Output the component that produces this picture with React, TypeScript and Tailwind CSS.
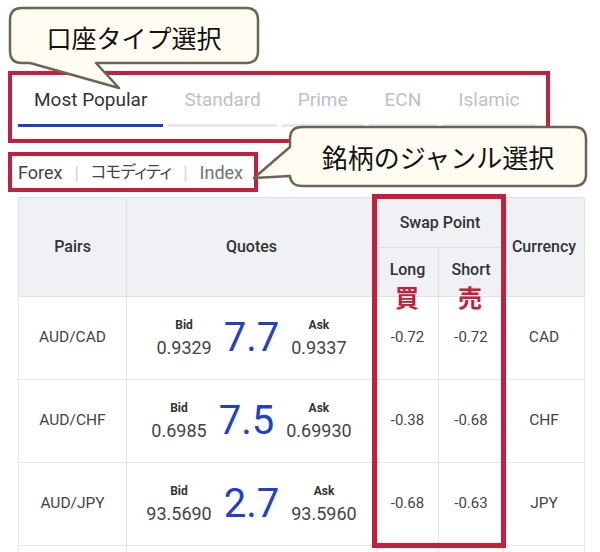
import React from 'react';

const RED = 'border-[#c2203d]';

const tabs = [
  { label: 'Most Popular', active: true },
  { label: 'Standard', active: false },
  { label: 'Prime', active: false },
  { label: 'ECN', active: false },
  { label: 'Islamic', active: false },
];

const rows = [
  { pair: 'AUD/CAD', bid: '0.9329', spread: '7.7', ask: '0.9337', long: '-0.72', short: '-0.72', ccy: 'CAD' },
  { pair: 'AUD/CHF', bid: '0.6985', spread: '7.5', ask: '0.69930', long: '-0.38', short: '-0.68', ccy: 'CHF' },
  { pair: 'AUD/JPY', bid: '93.5690', spread: '2.7', ask: '93.5960', long: '-0.68', short: '-0.63', ccy: 'JPY' },
];

const Price: React.FC<{ label: string; value: string }> = ({ label, value }) => (
  <div className="flex flex-col items-center">
    <span className="text-[12px] font-bold leading-none text-[#333]">{label}</span>
    <span className="mt-[8px] text-[18px] leading-none text-[#444]">{value}</span>
  </div>
);

export default function App() {
  return (
    <div className="relative h-[552px] w-[600px] overflow-hidden bg-white font-['Roboto','Noto_Sans_CJK_JP',sans-serif]">
      {/* account type tabs */}
      <div className="flex gap-[5px] pl-[18px] pt-[86px]">
        {tabs.map((t) => (
          <div key={t.label} className="flex flex-col">
            <span
              className={`px-4 text-[19px] leading-[28px] ${t.active ? 'text-[#333]' : 'text-[#bac1ce]'}`}
            >
              {t.label}
            </span>
            <div className={`mt-[10px] h-[3px] ${t.active ? 'bg-[#1c3fcc]' : 'bg-[#e6e8ec]'}`} />
          </div>
        ))}
      </div>

      {/* instrument categories */}
      <div className="mt-[34px] flex items-center gap-[12px] pl-[18px] text-[18px] leading-[24px]">
        <span className="text-[#444]">Forex</span>
        <span className="text-[#d4d4d4]">|</span>
        <span className="text-[16.5px] tracking-[-0.8px] text-[#444] [font-feature-settings:'palt']">コモディティ</span>
        <span className="text-[#d4d4d4]">|</span>
        <span className="text-[#6b7280]">Index</span>
      </div>

      {/* quotes table */}
      <table className="ml-[18px] mt-[12px] w-[566px] table-fixed border-collapse text-center text-[#444]">
        <colgroup>
          <col className="w-[108px]" />
          <col className="w-[250px]" />
          <col className="w-[62px]" />
          <col className="w-[65px]" />
          <col className="w-[81px]" />
        </colgroup>
        <thead className="bg-[#eff1f5] text-[16px] font-medium text-[#333]">
          <tr className="h-[50px]">
            <th rowSpan={2} className="border border-[#dfe1e6] font-medium">Pairs</th>
            <th rowSpan={2} className="border border-[#dfe1e6] font-medium">Quotes</th>
            <th colSpan={2} className="border border-[#dfe1e6] font-medium">Swap Point</th>
            <th rowSpan={2} className="border border-[#dfe1e6] font-medium">Currency</th>
          </tr>
          <tr className="h-[49px]">
            <th className="border border-[#dfe1e6] pb-[4px] font-medium">Long</th>
            <th className="border border-[#dfe1e6] pb-[4px] font-medium">Short</th>
          </tr>
        </thead>
        <tbody className="text-[15.5px]">
          {rows.map((r) => (
            <tr key={r.pair} className="h-[83px]">
              <td className="border border-[#e3e5e9]">{r.pair}</td>
              <td className="border border-[#e3e5e9]">
                <div className="flex items-center justify-center gap-3">
                  <Price label="Bid" value={r.bid} />
                  <span className="text-[40px] leading-none text-[#2340c8]">{r.spread}</span>
                  <Price label="Ask" value={r.ask} />
                </div>
              </td>
              <td className="border border-[#e3e5e9] pb-[2px] text-[15px]">{r.long}</td>
              <td className="border border-[#e3e5e9] pb-[2px] text-[15px]">{r.short}</td>
              <td className="border border-[#e3e5e9]">{r.ccy}</td>
            </tr>
          ))}
          <tr className="h-[83px]">
            <td className="border border-[#e3e5e9]" />
            <td className="border border-[#e3e5e9]" />
            <td className="border border-[#e3e5e9]" />
            <td className="border border-[#e3e5e9]" />
            <td className="border border-[#e3e5e9]" />
          </tr>
        </tbody>
      </table>

      {/* highlight frames */}
      <div className={`absolute left-[8px] top-[71px] h-[72px] w-[542px] border-4 ${RED}`} />
      <div className={`absolute left-[8px] top-[152px] h-[40px] w-[250px] border-4 ${RED}`} />
      <div className={`absolute left-[372px] top-[194px] h-[354px] w-[134px] border-[5px] ${RED}`} />

      {/* buy / sell marks */}
      <span className="absolute left-[395px] top-[283px] font-['Noto_Sans_CJK_JP',sans-serif] text-[24px] font-bold leading-[28px] text-[#c2203d]">
        買
      </span>
      <span className="absolute left-[458px] top-[283px] font-['Noto_Sans_CJK_JP',sans-serif] text-[24px] font-bold leading-[28px] text-[#c2203d]">
        売
      </span>

      {/* callout: account type */}
      <div className="absolute left-0 top-0 h-[95px] w-[270px]">
        <svg className="absolute inset-0" width="270" height="95" viewBox="0 0 270 95">
          <path
            d="M22 8 H246 Q258 8 258 20 V51 Q258 63 246 63 H96 L119 88 L30 63 H22 Q10 63 10 51 V20 Q10 8 22 8 Z"
            fill="#fffdf1"
            stroke="#6f6354"
            strokeWidth="2.5"
            strokeLinejoin="round"
          />
        </svg>
        <div className="absolute left-[10px] top-[8px] flex h-[55px] w-[248px] items-center justify-center pt-[4px] font-['Noto_Sans_CJK_JP',sans-serif] text-[25px] leading-none text-[#111]">
          口座タイプ選択
        </div>
      </div>

      {/* callout: instrument genre */}
      <div className="absolute left-[240px] top-[120px] h-[75px] w-[352px]">
        <svg className="absolute inset-0" width="352" height="75" viewBox="240 120 352 75">
          <path
            d="M302 127 H574 Q586 127 586 139 V174 Q586 186 574 186 H302 Q291 186 290 176 L254 178 L290 147 V139 Q290 127 302 127 Z"
            fill="#fffdf1"
            stroke="#6f6354"
            strokeWidth="2.5"
            strokeLinejoin="round"
          />
        </svg>
        <div className="absolute left-[50px] top-[7px] flex h-[59px] w-[296px] items-center justify-center font-['Noto_Sans_CJK_JP',sans-serif] text-[26px] leading-none text-[#111]">
          銘柄のジャンル選択
        </div>
      </div>
    </div>
  );
}
